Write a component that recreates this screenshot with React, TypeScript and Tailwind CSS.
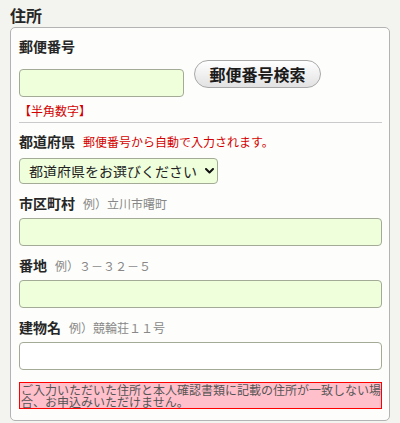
import React from "react";

const font = { fontFamily: '"Noto Sans CJK JP", "Noto Sans", sans-serif' };

function Label({ children, hint, hintRed }: { children: React.ReactNode; hint?: string; hintRed?: boolean }) {
  return (
    <div className="flex items-baseline leading-[20px]">
      <span className="text-[14px] font-bold text-[#262626]">{children}</span>
      {hint && (
        <span className={`ml-2 text-[12px] ${hintRed ? "text-[#d40000]" : "text-[#888]"}`}>{hint}</span>
      )}
    </div>
  );
}

const inputCls =
  "block w-full h-[28px] rounded-[4px] border border-[#a3aa96] bg-[#efffdc] px-2 text-[14px] outline-none";

export default function App() {
  return (
    <div className="w-[400px] h-[423px] bg-[#f3f4ef] px-[10px]" style={font}>
      <div className="pt-[5px] h-[27px] text-[16px] font-bold leading-[20px] text-[#262626]">住所</div>
      <div className="rounded-[5px] border border-[#b3b3b3] bg-[#fdfefb] pl-[8px] pr-[7px] pt-[8px] pb-[11px]">
        <Label>郵便番号</Label>
        <div className="mt-[4px] flex items-start">
          <input className={`${inputCls} !w-[165px] mt-[9px]`} />
          <button className="ml-[10px] h-[28px] w-[127px] rounded-full border border-[#a8a8a8] bg-gradient-to-b from-[#ffffff] to-[#e2e2e2] text-[16px] font-bold leading-none text-[#1a1a1a]">
            郵便番号検索
          </button>
        </div>
        <div className="mt-[4px] h-[22px] border-b border-[#cacaca] text-[12px] leading-[20px] text-[#d40000]">【半角数字】</div>
        <div className="mt-[8px]">
          <Label hint="郵便番号から自動で入力されます。" hintRed>
            都道府県
          </Label>
        </div>
        <div className="relative mt-[6px] w-[199px]">
          <select className="block h-[26px] w-[199px] appearance-none rounded-[4px] border border-[#a3aa96] bg-[#efffdc] pl-[9px] text-[14px] leading-none text-[#222] outline-none">
            <option>都道府県をお選びください</option>
          </select>
          <svg className="pointer-events-none absolute left-[186px] top-[10px]" width="9" height="6" viewBox="0 0 9 6">
            <path d="M1 1 L4.5 4.5 L8 1" fill="none" stroke="#111" strokeWidth="2" strokeLinecap="round" strokeLinejoin="round" />
          </svg>
        </div>
        <div className="mt-[9px]">
          <Label hint="例）立川市曙町">市区町村</Label>
        </div>
        <input className={`${inputCls} mt-[4px]`} />
        <div className="mt-[9px]">
          <Label hint="例）３－３２－５">番地</Label>
        </div>
        <input className={`${inputCls} mt-[4px]`} />
        <div className="mt-[9px]">
          <Label hint="例）競輪荘１１号">建物名</Label>
        </div>
        <input className={`${inputCls} mt-[4px] !bg-white`} />
        <div className="mt-[12px] h-[27px] border border-[#ff0000] bg-[#ffc0cb] px-[1px] pt-[0.5px] text-[12px] leading-[12.5px] text-[#555]">
          <div className="whitespace-nowrap">ご入力いただいた住所と本人確認書類に記載の住所が一致しない場</div>
          <div className="whitespace-nowrap">合、お申込みいただけません。</div>
        </div>
      </div>
    </div>
  );
}
